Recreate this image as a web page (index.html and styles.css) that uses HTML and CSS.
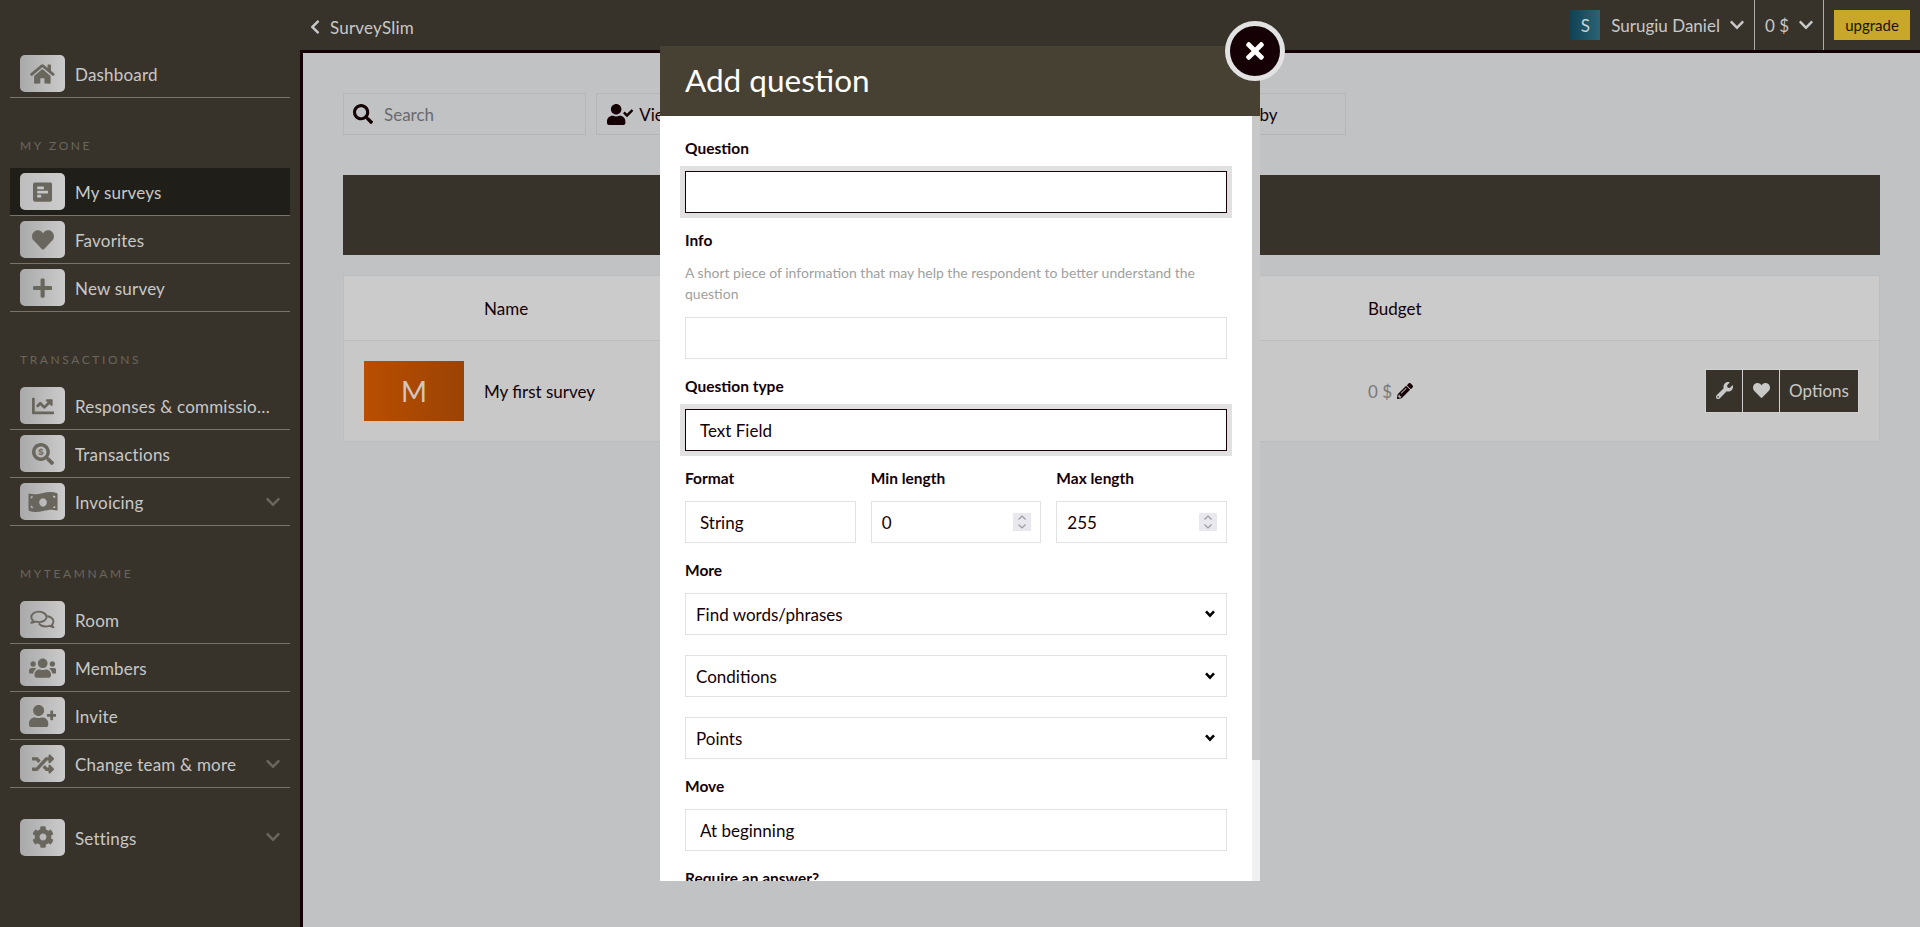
FILE: index.html
```html
<!DOCTYPE html>
<html lang="en">
<head>
    <meta charset="UTF-8">
    <meta name="viewport" content="width=device-width, initial-scale=1.0">
    <title>SurveySlim</title>
    <link rel="stylesheet" href="styles.css">
</head>
<body>
    <div class="app">
        <!-- Sidebar -->
        <nav class="sidebar">
            <a class="nav-item">
                <span class="tile"><svg class="ico" viewBox="0 0 576 512"><path d="M280.37 148.26L96 300.11V464a16 16 0 0 0 16 16l112.06-.29a16 16 0 0 0 15.92-16V368a16 16 0 0 1 16-16h64a16 16 0 0 1 16 16v95.64a16 16 0 0 0 16 16.05L464 480a16 16 0 0 0 16-16V300L295.67 148.26a12.19 12.19 0 0 0-15.3 0zM571.6 251.47L488 182.56V44.05a12 12 0 0 0-12-12h-56a12 12 0 0 0-12 12v72.61L318.47 43a48 48 0 0 0-61 0L4.34 251.47a12 12 0 0 0-1.6 16.9l25.5 31A12 12 0 0 0 45.15 301l235.22-193.74a12.19 12.19 0 0 1 15.3 0L530.9 301a12 12 0 0 0 16.9-1.6l25.5-31a12 12 0 0 0-1.7-16.93z"/></svg></span>
                <span class="nav-label">Dashboard</span>
            </a>

            <div class="nav-title">MY ZONE</div>
            <a class="nav-item active">
                <span class="tile"><svg class="ico" viewBox="0 0 448 512"><path d="M448 432V80c0-26.5-21.5-48-48-48H48C21.5 32 0 53.5 0 80v352c0 26.5 21.5 48 48 48h352c26.5 0 48-21.5 48-48zM112 192c-8.84 0-16-7.16-16-16v-32c0-8.84 7.16-16 16-16h128c8.84 0 16 7.16 16 16v32c0 8.84-7.16 16-16 16H112zm0 96c-8.84 0-16-7.16-16-16v-32c0-8.84 7.16-16 16-16h224c8.84 0 16 7.16 16 16v32c0 8.84-7.16 16-16 16H112zm0 96c-8.84 0-16-7.16-16-16v-32c0-8.84 7.16-16 16-16h64c8.84 0 16 7.16 16 16v32c0 8.84-7.16 16-16 16h-64z"/></svg></span>
                <span class="nav-label">My surveys</span>
            </a>
            <a class="nav-item">
                <span class="tile"><svg class="ico" viewBox="0 0 512 512"><path d="M462.3 62.6C407.5 15.9 326 24.3 275.7 76.2L256 96.5l-19.7-20.3C186.1 24.3 104.5 15.9 49.7 62.6c-62.8 53.6-66.1 149.8-9.9 207.9l193.5 199.8c12.5 12.9 32.8 12.9 45.3 0l193.5-199.8c56.3-58.1 53-154.3-9.8-207.9z"/></svg></span>
                <span class="nav-label">Favorites</span>
            </a>
            <a class="nav-item">
                <span class="tile"><svg class="ico" viewBox="0 0 448 512"><path d="M416 208H272V64c0-17.67-14.33-32-32-32h-32c-17.67 0-32 14.33-32 32v144H32c-17.67 0-32 14.33-32 32v32c0 17.67 14.33 32 32 32h144v144c0 17.67 14.33 32 32 32h32c17.67 0 32-14.33 32-32V304h144c17.67 0 32-14.33 32-32v-32c0-17.67-14.33-32-32-32z"/></svg></span>
                <span class="nav-label">New survey</span>
            </a>

            <div class="nav-title">TRANSACTIONS</div>
            <a class="nav-item">
                <span class="tile"><svg class="ico" viewBox="0 0 512 512"><path d="M496 384H64V80c0-8.84-7.16-16-16-16H16C7.16 64 0 71.16 0 80v336c0 17.67 14.33 32 32 32h464c8.84 0 16-7.16 16-16v-32c0-8.84-7.16-16-16-16zM464 96H345.94c-21.38 0-32.09 25.85-16.97 40.97l32.4 32.4L288 242.75l-73.37-73.37c-12.5-12.5-32.76-12.5-45.25 0l-68.69 68.69c-6.25 6.25-6.25 16.38 0 22.63l22.62 22.62c6.25 6.25 16.38 6.25 22.63 0L192 237.25l73.37 73.37c12.5 12.5 32.76 12.5 45.25 0l96-96 32.4 32.4c15.12 15.12 40.97 4.41 40.97-16.97V112c.01-8.84-7.15-16-15.99-16z"/></svg></span>
                <span class="nav-label">Responses &amp; commissio…</span>
            </a>
            <a class="nav-item">
                <span class="tile"><svg class="ico" viewBox="0 0 512 512"><path d="M505 442.7L405.3 343c-4.5-4.5-10.6-7-17-7H372c27.6-35.3 44-79.7 44-128C416 93.1 322.9 0 208 0S0 93.1 0 208s93.1 208 208 208c48.3 0 92.7-16.4 128-44v16.3c0 6.4 2.5 12.5 7 17l99.7 99.7c9.4 9.4 24.6 9.4 33.9 0l28.3-28.3c9.4-9.4 9.4-24.6.1-34zM208 336c-70.7 0-128-57.2-128-128 0-70.7 57.2-128 128-128 70.7 0 128 57.2 128 128 0 70.7-57.2 128-128 128z"/><text x="208" y="288" text-anchor="middle" font-size="220" font-weight="700">$</text></svg></span>
                <span class="nav-label">Transactions</span>
            </a>
            <a class="nav-item">
                <span class="tile"><svg class="ico ico-money" viewBox="0 0 640 512"><path fill-rule="evenodd" d="M10 90c0-12 10-18 20-14 90 34 190 10 290-12 90-20 190-34 290-2 12 4 20 12 20 26v334c0 12-10 18-20 14-90-34-190-10-290 12-90 20-190 34-290 2-12-4-20-12-20-26zM320 176a80 90 0 1 0 .1 0zM60 130c0 30-4 44 0 52 24 0 40-12 46-44-16 0-32-2-46-8zM580 130c-16-4-34-6-52-6 4 28 24 46 52 50zM60 330v50c18 6 34 8 52 10-4-30-24-54-52-60zM580 340c-24 2-42 20-46 46 16-2 32-2 46 0z"/></svg></span>
                <span class="nav-label">Invoicing</span>
                <svg class="caret" viewBox="0 0 448 512"><path d="M207.029 381.476L12.686 187.132c-9.373-9.373-9.373-24.569 0-33.941l22.667-22.667c9.357-9.357 24.522-9.375 33.901-.04L224 284.505l154.745-154.021c9.379-9.335 24.544-9.317 33.901.04l22.667 22.667c9.373 9.373 9.373 24.569 0 33.941L240.971 381.476c-9.373 9.372-24.569 9.372-33.942 0z"/></svg>
            </a>

            <div class="nav-title">MYTEAMNAME</div>
            <a class="nav-item">
                <span class="tile"><svg class="ico" viewBox="0 0 576 512"><g fill="none" stroke="currentColor" stroke-width="44" stroke-linejoin="round"><path d="M208 62C108 62 30 118 30 188c0 30 14 56 38 78-8 24-22 42-38 58 34-4 66-16 90-34 26 10 56 16 88 16 100 0 178-56 178-118S308 62 208 62z"/><path d="M400 170c82 6 146 58 146 118 0 30-14 56-38 78 8 24 22 42 38 58-34-4-66-16-90-34-26 10-56 16-88 16-70 0-130-28-160-72"/></g></svg></span>
                <span class="nav-label">Room</span>
            </a>
            <a class="nav-item">
                <span class="tile"><svg class="ico" viewBox="0 0 640 512"><path d="M96 224c35.3 0 64-28.7 64-64s-28.7-64-64-64-64 28.7-64 64 28.7 64 64 64zm448 0c35.3 0 64-28.7 64-64s-28.7-64-64-64-64 28.7-64 64 28.7 64 64 64zm32 32h-64c-17.6 0-33.5 7.1-45.1 18.6 40.3 22.1 68.9 62 75.1 109.4h66c17.7 0 32-14.3 32-32v-32c0-35.3-28.7-64-64-64zm-256 0c61.9 0 112-50.1 112-112S381.9 32 320 32 208 82.1 208 144s50.1 112 112 112zm76.8 32h-8.3c-20.8 10-43.9 16-68.5 16s-47.6-6-68.5-16h-8.3C179.6 288 128 339.6 128 403.2V432c0 26.5 21.5 48 48 48h288c26.5 0 48-21.5 48-48v-28.8c0-63.6-51.6-115.2-115.2-115.2zm-223.7-13.4C161.5 263.1 145.6 256 128 256H64c-35.3 0-64 28.7-64 64v32c0 17.7 14.3 32 32 32h65.9c6.3-47.4 34.9-87.3 75.2-109.4z"/></svg></span>
                <span class="nav-label">Members</span>
            </a>
            <a class="nav-item">
                <span class="tile"><svg class="ico" viewBox="0 0 640 512"><path d="M624 208h-64v-64c0-8.8-7.2-16-16-16h-32c-8.8 0-16 7.2-16 16v64h-64c-8.8 0-16 7.2-16 16v32c0 8.8 7.2 16 16 16h64v64c0 8.8 7.2 16 16 16h32c8.8 0 16-7.2 16-16v-64h64c8.8 0 16-7.2 16-16v-32c0-8.8-7.2-16-16-16zm-400 48c70.7 0 128-57.3 128-128S294.7 0 224 0 96 57.3 96 128s57.3 128 128 128zm89.6 32h-16.7c-22.2 10.2-46.9 16-72.9 16s-50.6-5.8-72.9-16h-16.7C60.2 288 0 348.2 0 422.4V464c0 26.5 21.5 48 48 48h352c26.5 0 48-21.5 48-48v-41.6c0-74.2-60.2-134.4-134.4-134.4z"/></svg></span>
                <span class="nav-label">Invite</span>
            </a>
            <a class="nav-item">
                <span class="tile"><svg class="ico" viewBox="0 0 512 512"><path d="M504.971 359.029c9.373 9.373 9.373 24.569 0 33.941l-80 79.984c-15.01 15.01-40.971 4.49-40.971-16.971V416h-58.785a12.004 12.004 0 0 1-8.773-3.812l-70.556-75.596 53.333-57.143L352 336h32v-39.981c0-21.438 25.943-31.998 40.971-16.971l80 79.981zM12 176h84l52.781 56.551 53.333-57.143-70.556-75.596A11.999 11.999 0 0 0 122.785 96H12c-6.627 0-12 5.373-12 12v56c0 6.627 5.373 12 12 12zm372 0v39.984c0 21.46 25.961 31.98 40.971 16.971l80-79.984c9.373-9.373 9.373-24.569 0-33.941l-80-79.981C409.943 24.021 384 34.582 384 56.019V96h-58.785a12.004 12.004 0 0 0-8.773 3.812L96 336H12c-6.627 0-12 5.373-12 12v56c0 6.627 5.373 12 12 12h110.785c3.326 0 6.503-1.381 8.773-3.812L352 176h32z"/></svg></span>
                <span class="nav-label">Change team &amp; more</span>
                <svg class="caret" viewBox="0 0 448 512"><path d="M207.029 381.476L12.686 187.132c-9.373-9.373-9.373-24.569 0-33.941l22.667-22.667c9.357-9.357 24.522-9.375 33.901-.04L224 284.505l154.745-154.021c9.379-9.335 24.544-9.317 33.901.04l22.667 22.667c9.373 9.373 9.373 24.569 0 33.941L240.971 381.476c-9.373 9.372-24.569 9.372-33.942 0z"/></svg>
            </a>

            <a class="nav-item nav-settings">
                <span class="tile"><svg class="ico" viewBox="0 0 512 512"><path d="M487.4 315.7l-42.6-24.6c4.3-23.2 4.3-47 0-70.2l42.6-24.6c4.9-2.8 7.1-8.6 5.5-14-11.1-35.6-30-67.8-54.7-94.6-3.8-4.1-10-5.1-14.8-2.3L380.8 110c-17.9-15.4-38.5-27.3-60.8-35.1V25.8c0-5.6-3.9-10.5-9.4-11.7-36.7-8.2-74.3-7.8-109.2 0-5.5 1.2-9.4 6.1-9.4 11.7V75c-22.2 7.9-42.8 19.8-60.8 35.1L88.7 85.5c-4.9-2.8-11-1.9-14.8 2.3-24.7 26.7-43.6 58.9-54.7 94.6-1.7 5.4.6 11.2 5.5 14L67.3 221c-4.3 23.2-4.3 47 0 70.2l-42.6 24.6c-4.9 2.8-7.1 8.6-5.5 14 11.1 35.6 30 67.8 54.7 94.6 3.8 4.1 10 5.1 14.8 2.3l42.6-24.6c17.9 15.4 38.5 27.3 60.8 35.1v49.2c0 5.6 3.9 10.5 9.4 11.7 36.7 8.2 74.3 7.8 109.2 0 5.5-1.2 9.4-6.1 9.4-11.7v-49.2c22.2-7.9 42.8-19.8 60.8-35.1l42.6 24.6c4.9 2.8 11 1.9 14.8-2.3 24.7-26.7 43.6-58.9 54.7-94.6 1.5-5.5-.7-11.3-5.6-14.1zM256 336c-44.1 0-80-35.9-80-80s35.9-80 80-80 80 35.9 80 80-35.9 80-80 80z"/></svg></span>
                <span class="nav-label">Settings</span>
                <svg class="caret" viewBox="0 0 448 512"><path d="M207.029 381.476L12.686 187.132c-9.373-9.373-9.373-24.569 0-33.941l22.667-22.667c9.357-9.357 24.522-9.375 33.901-.04L224 284.505l154.745-154.021c9.379-9.335 24.544-9.317 33.901.04l22.667 22.667c9.373 9.373 9.373 24.569 0 33.941L240.971 381.476c-9.373 9.372-24.569 9.372-33.942 0z"/></svg>
            </a>
        </nav>

        <div class="content">
            <!-- Top bar -->
            <header class="topbar">
                <a class="back">
                    <svg class="back-ico" viewBox="0 0 320 512"><path d="M34.52 239.03L228.87 44.69c9.37-9.37 24.57-9.37 33.94 0l22.67 22.67c9.36 9.36 9.37 24.52.04 33.9L131.49 256l154.02 154.75c9.34 9.38 9.32 24.54-.04 33.9l-22.67 22.67c-9.37 9.37-24.57 9.37-33.94 0L34.52 272.97c-9.37-9.37-9.37-24.57 0-33.94z"/></svg>
                    SurveySlim
                </a>
                <div class="top-right">
                    <div class="top-user">
                        <span class="avatar">S</span>
                        <span>Surugiu Daniel</span>
                        <svg class="top-caret" viewBox="0 0 448 512"><path d="M207.029 381.476L12.686 187.132c-9.373-9.373-9.373-24.569 0-33.941l22.667-22.667c9.357-9.357 24.522-9.375 33.901-.04L224 284.505l154.745-154.021c9.379-9.335 24.544-9.317 33.901.04l22.667 22.667c9.373 9.373 9.373 24.569 0 33.941L240.971 381.476c-9.373 9.372-24.569 9.372-33.942 0z"/></svg>
                    </div>
                    <div class="top-money">
                        <span>0 $</span>
                        <svg class="top-caret" viewBox="0 0 448 512"><path d="M207.029 381.476L12.686 187.132c-9.373-9.373-9.373-24.569 0-33.941l22.667-22.667c9.357-9.357 24.522-9.375 33.901-.04L224 284.505l154.745-154.021c9.379-9.335 24.544-9.317 33.901.04l22.667 22.667c9.373 9.373 9.373 24.569 0 33.941L240.971 381.476c-9.373 9.372-24.569 9.372-33.942 0z"/></svg>
                    </div>
                    <div class="top-upgrade"><a class="upgrade">upgrade</a></div>
                </div>
            </header>

            <main class="main">
                <div class="filters">
                    <div class="filter filter-search">
                        <svg class="filter-ico" viewBox="0 0 512 512"><path d="M505 442.7L405.3 343c-4.5-4.5-10.6-7-17-7H372c27.6-35.3 44-79.7 44-128C416 93.1 322.9 0 208 0S0 93.1 0 208s93.1 208 208 208c48.3 0 92.7-16.4 128-44v16.3c0 6.4 2.5 12.5 7 17l99.7 99.7c9.4 9.4 24.6 9.4 33.9 0l28.3-28.3c9.4-9.4 9.4-24.6.1-34zM208 336c-70.7 0-128-57.2-128-128 0-70.7 57.2-128 128-128 70.7 0 128 57.2 128 128 0 70.7-57.2 128-128 128z"/></svg>
                        <span class="filter-placeholder">Search</span>
                    </div>
                    <div class="filter filter-view">
                        <svg class="filter-ico" viewBox="0 0 640 512"><path d="M224 256c70.7 0 128-57.3 128-128S294.7 0 224 0 96 57.3 96 128s57.3 128 128 128zm89.6 32h-16.7c-22.2 10.2-46.9 16-72.9 16s-50.6-5.8-72.9-16h-16.7C60.2 288 0 348.2 0 422.4V464c0 26.5 21.5 48 48 48h352c26.5 0 48-21.5 48-48v-41.6c0-74.2-60.2-134.4-134.4-134.4zm323-128.4l-27.8-28.1c-4.6-4.7-12.1-4.7-16.8-.1l-104.8 104-45.5-45.8c-4.6-4.7-12.1-4.7-16.8-.1l-28.1 27.9c-4.7 4.6-4.7 12.1-.1 16.8l81.7 82.3c4.6 4.7 12.1 4.7 16.8.1l141.3-140.2c4.6-4.7 4.7-12.2.1-16.8z"/></svg>
                        <span>View</span>
                    </div>
                    <div class="filter filter-sort"><span>Sort by</span></div>
                </div>

                <div class="banner"></div>

                <div class="table">
                    <div class="table-row table-head">
                        <div></div>
                        <div>Name</div>
                        <div>Budget</div>
                        <div></div>
                    </div>
                    <div class="table-row table-body">
                        <div class="thumb">M</div>
                        <div>My first survey</div>
                        <div class="budget">
                            <span>0 $</span>
                            <svg class="pencil" viewBox="0 0 512 512"><path d="M497.9 142.1l-46.1 46.1c-4.7 4.7-12.3 4.7-17 0l-111-111c-4.7-4.7-4.7-12.3 0-17l46.1-46.1c18.7-18.7 49.1-18.7 67.9 0l60.1 60.1c18.8 18.7 18.8 49.1 0 67.9zM284.2 99.8L21.6 362.4.4 483.9c-2.9 16.4 11.4 30.6 27.8 27.8l121.5-21.3 262.6-262.6c4.7-4.7 4.7-12.3 0-17l-111-111c-4.8-4.7-12.4-4.7-17.1 0zM124.1 339.9c-5.5-5.5-5.5-14.3 0-19.8l154-154c5.5-5.5 14.3-5.5 19.8 0s5.5 14.3 0 19.8l-154 154c-5.5 5.5-14.3 5.5-19.8 0zM88 424h48v36.3l-64.5 11.3-31.1-31.1L51.7 376H88v48z"/></svg>
                        </div>
                        <div class="actions">
                            <a class="action action-ico"><svg viewBox="0 0 512 512"><path d="M507.73 109.1c-2.24-9.03-13.54-12.09-20.12-5.51l-74.36 74.36-67.88-11.31-11.31-67.88 74.36-74.36c6.62-6.62 3.43-17.9-5.66-20.16-47.38-11.74-99.55.91-136.58 37.93-39.64 39.64-50.55 97.1-34.05 147.2L18.74 402.76c-24.99 24.99-24.99 65.51 0 90.5 24.99 24.99 65.51 24.99 90.5 0l213.21-213.21c50.12 16.71 107.47 5.68 147.37-34.22 37.07-37.07 49.7-89.32 37.91-136.73zM64 472c-13.25 0-24-10.75-24-24 0-13.26 10.75-24 24-24s24 10.74 24 24c0 13.25-10.75 24-24 24z"/></svg></a>
                            <a class="action action-ico"><svg viewBox="0 0 512 512"><path d="M462.3 62.6C407.5 15.9 326 24.3 275.7 76.2L256 96.5l-19.7-20.3C186.1 24.3 104.5 15.9 49.7 62.6c-62.8 53.6-66.1 149.8-9.9 207.9l193.5 199.8c12.5 12.9 32.8 12.9 45.3 0l193.5-199.8c56.3-58.1 53-154.3-9.8-207.9z"/></svg></a>
                            <a class="action action-text">Options</a>
                        </div>
                    </div>
                </div>
            </main>
        </div>
    </div>

    <!-- Add question modal -->
    <div class="modal">
        <div class="modal-head">
            <h2>Add question</h2>
        </div>
        <button class="modal-close" type="button" aria-label="Close">
            <svg viewBox="0 0 352 512"><path d="M242.72 256l100.07-100.07c12.28-12.28 12.28-32.19 0-44.48l-22.24-22.24c-12.28-12.28-32.19-12.28-44.48 0L176 189.28 75.93 89.21c-12.28-12.28-32.19-12.28-44.48 0L9.21 111.45c-12.28 12.28-12.28 32.19 0 44.48L109.28 256 9.21 356.07c-12.28 12.28-12.28 32.19 0 44.48l22.24 22.24c12.28 12.28 32.2 12.28 44.48 0L176 322.72l100.07 100.07c12.28 12.28 32.2 12.28 44.48 0l22.24-22.24c12.28-12.28 12.28-32.19 0-44.48L242.72 256z"/></svg>
        </button>
        <div class="modal-main">
            <form class="modal-body">
                <div class="field">
                    <label for="question">Question</label>
                    <input id="question" class="input focus" type="text">
                </div>
                <div class="field">
                    <label for="info">Info</label>
                    <p class="help">A short piece of information that may help the respondent to better understand the question</p>
                    <input id="info" class="input" type="text">
                </div>
                <div class="field">
                    <label for="qtype">Question type</label>
                    <input id="qtype" class="input focus" type="text" value="Text Field">
                </div>
                <div class="field-row">
                    <div class="field">
                        <label for="format">Format</label>
                        <input id="format" class="input" type="text" value="String">
                    </div>
                    <div class="field">
                        <label for="minlen">Min length</label>
                        <div class="number-wrap">
                            <input id="minlen" class="input number" type="number" value="0">
                            <span class="spin"><svg viewBox="0 0 14 18"><path d="M3.5 6.5L7 3l3.5 3.5M3.5 11.5L7 15l3.5-3.5"/></svg></span>
                        </div>
                    </div>
                    <div class="field">
                        <label for="maxlen">Max length</label>
                        <div class="number-wrap">
                            <input id="maxlen" class="input number" type="number" value="255">
                            <span class="spin"><svg viewBox="0 0 14 18"><path d="M3.5 6.5L7 3l3.5 3.5M3.5 11.5L7 15l3.5-3.5"/></svg></span>
                        </div>
                    </div>
                </div>
                <div class="field">
                    <label for="words">More</label>
                    <select id="words" class="select"><option>Find words/phrases</option></select>
                    <select class="select" aria-label="Conditions"><option>Conditions</option></select>
                    <select class="select" aria-label="Points"><option>Points</option></select>
                </div>
                <div class="field">
                    <label for="move">Move</label>
                    <input id="move" class="input" type="text" value="At beginning">
                </div>
                <div class="field">
                    <label>Require an answer?</label>
                </div>
            </form>
            <div class="scrollbar"><div class="scrollbar-thumb"></div></div>
        </div>
    </div>
</body>
</html>
```

FILE: styles.css
```css
* {
    box-sizing: border-box;
}
html, body {
    height: 100%;
}
body {
    margin: 0;
    overflow: hidden;
    font-family: "Lato", "Noto Sans", sans-serif;
    font-size: 17px;
    color: #140005;
    background: #c1c2c4;
}
.app {
    display: flex;
    height: 927px;
}

/* Sidebar */
.sidebar {
    width: 300px;
    flex: none;
    padding: 50px 10px 0;
    background: #38332a;
    color: #c8c8c8;
}
.nav-item {
    display: flex;
    align-items: center;
    height: 48px;
    padding: 5px 10px 5px 10px;
    border-bottom: 1px solid #78746a;
}
.nav-item.active {
    background: #1f1e19;
}
.nav-settings {
    margin-top: 25px;
    border-bottom: 0;
}
.tile {
    display: flex;
    align-items: center;
    justify-content: center;
    flex: none;
    width: 45px;
    height: 37px;
    margin-right: 10px;
    border-radius: 5px;
    background: linear-gradient(90deg, #a9a9a9, #cbcbcb);
    color: #69665e;
}
.nav-item.active .tile {
    background: linear-gradient(90deg, #bdbdbd, #cdcdcd);
}
.ico {
    height: 22px;
    fill: currentColor;
}
.ico-money {
    height: 24px;
}
.ico text {
    font-family: "Liberation Sans", sans-serif;
}
.nav-label {
    flex: 1;
    min-width: 0;
    padding-top: 2px;
    letter-spacing: .2px;
    white-space: nowrap;
}
.caret {
    flex: none;
    width: 14px;
    height: 16px;
    margin-left: 26px;
    fill: #69665e;
}
.nav-title {
    height: 20px;
    margin: 38px 0 12px 10px;
    font-size: 12px;
    line-height: 20px;
    letter-spacing: 2.6px;
    color: #69665e;
}

/* Top bar */
.content {
    flex: 1;
    min-width: 0;
    display: flex;
    flex-direction: column;
}
.topbar {
    display: flex;
    align-items: center;
    justify-content: space-between;
    flex: none;
    height: 50px;
    background: #38332a;
    color: #c8c8c8;
}
.back {
    display: flex;
    align-items: center;
    gap: 10px;
    padding: 4px 0 0 10px;
    letter-spacing: .2px;
}
.back-ico {
    width: 10px;
    height: 16px;
    fill: #c8c8c8;
}
.top-right {
    display: flex;
    align-items: stretch;
    height: 50px;
}
.top-user, .top-money {
    display: flex;
    align-items: center;
}
.top-user {
    padding-right: 10px;
}
.avatar {
    display: flex;
    align-items: center;
    justify-content: center;
    width: 30px;
    height: 30px;
    margin-right: 11px;
    background: linear-gradient(90deg, #0f4254, #2b6475);
    color: #c8d4d8;
    font-size: 17px;
}
.top-caret {
    width: 14px;
    height: 16px;
    margin-left: 10px;
    fill: #c8c8c8;
}
.top-money {
    padding: 0 10px;
    border-left: 1px solid #b0aea8;
}
.top-upgrade {
    display: flex;
    align-items: center;
    padding: 0 10px;
    border-left: 1px solid #b0aea8;
}
.upgrade {
    display: flex;
    align-items: center;
    justify-content: center;
    width: 76px;
    height: 30px;
    background: #c9a72a;
    color: #1a1400;
    font-size: 15px;
}

/* Page */
.main {
    flex: 1;
    padding: 40px 40px 0;
    border-top: 3px solid #140005;
    border-left: 3px solid #140005;
    background: #c1c2c4;
}
.filters {
    display: flex;
    gap: 10px;
    height: 42px;
    width: 1003px;
    margin-bottom: 40px;
}
.filter {
    display: flex;
    align-items: center;
    border: 1px solid #b5b6b8;
}
.filter-search {
    width: 243px;
    padding-left: 9px;
}
.filter-view {
    width: 520px;
    padding-left: 10px;
}
.filter-sort {
    flex: 1;
    padding-left: 97px;
}
.filter-ico {
    height: 20px;
    margin-right: 11px;
    fill: #140005;
}
.filter-view .filter-ico {
    height: 21px;
    margin-right: 6px;
}
.filter-placeholder {
    color: #6a6a6c;
}
.banner {
    height: 80px;
    margin-bottom: 20px;
    background: #38332a;
}
.table {
    border: 1px solid #bcbdbf;
}
.table-row {
    display: grid;
    grid-template-columns: 140px 884px 1fr auto;
    align-items: center;
}
.table-head {
    height: 65px;
    border-bottom: 1px solid #bcbdbf;
    background: #cbcbcb;
}
.table-body {
    height: 100px;
    padding-right: 20px;
    background: #c8c8c8;
}
.thumb {
    display: flex;
    align-items: center;
    justify-content: center;
    width: 100px;
    height: 60px;
    margin-left: 20px;
    background: linear-gradient(90deg, #b94e00, #9b4305);
    color: #d0c8c0;
    font-size: 28px;
}
.budget {
    display: flex;
    align-items: center;
    gap: 5px;
    color: #787878;
}
.pencil {
    width: 16px;
    height: 16px;
    fill: #140005;
}
.actions {
    display: flex;
    height: 44px;
    margin-bottom: 1px;
    border: 1px solid #d0d0d0;
    background: #38332a;
    color: #c8c8c8;
}
.action {
    display: flex;
    align-items: center;
    justify-content: center;
}
.action + .action {
    border-left: 1px solid #d0d0d0;
}
.action-ico {
    width: 37px;
}
.action-ico:first-child {
    width: 36px;
}
.action-ico svg {
    width: 17px;
    height: 17px;
    fill: #c8c8c8;
}
.action-text {
    width: 79px;
}

/* Modal */
.modal {
    position: fixed;
    top: 46px;
    left: 660px;
    display: flex;
    flex-direction: column;
    width: 600px;
    height: 835px;
    background: #fff;
}
.modal-head {
    flex: none;
    display: flex;
    align-items: center;
    height: 70px;
    padding: 0 0 2px 25px;
    background: #474133;
}
.modal-head h2 {
    margin: 0;
    font-size: 31.5px;
    font-weight: 400;
    color: #fff;
}
.modal-close {
    position: absolute;
    top: -25px;
    left: 565px;
    display: flex;
    align-items: center;
    justify-content: center;
    width: 60px;
    height: 60px;
    padding: 0;
    border: 5px solid #e2e2e2;
    border-radius: 50%;
    background: #140005;
}
.modal-close svg {
    width: 18px;
    height: 26px;
    fill: #fff;
}
.modal-main {
    flex: 1;
    min-height: 0;
    display: flex;
}
.modal-body {
    flex: 1;
    min-width: 0;
    overflow: hidden;
    padding: 23px 25px 0;
}
.scrollbar {
    flex: none;
    width: 8px;
    background: #f0f0f0;
}
.scrollbar-thumb {
    height: 644px;
    background: #c8c8c8;
}
.field {
    margin-bottom: 18px;
}
.field label {
    display: block;
    height: 20px;
    margin-bottom: 12px;
    font-size: 15.5px;
    line-height: 18px;
    font-weight: 700;
}
.help {
    margin: -1px 0 13px;
    font-size: 14px;
    line-height: 21px;
    color: #a0a0a0;
}
.input, .select {
    display: block;
    width: 100%;
    height: 42px;
    font: inherit;
    color: #140005;
    background: #fff;
    border: 1px solid #e2e2e2;
    border-radius: 0;
    outline: 0;
}
.input {
    padding: 0 14px;
}
.input.focus {
    border-color: #140005;
    box-shadow: 0 0 0 5px #e1e1e1;
}
.number-wrap {
    position: relative;
}
.number {
    padding: 0 10px;
    appearance: textfield;
}
.number::-webkit-inner-spin-button {
    display: none;
}
.spin {
    position: absolute;
    top: 12px;
    right: 10px;
    display: block;
    width: 18px;
    height: 18px;
    background: #e8e8ee;
}
.spin svg {
    display: block;
    width: 18px;
    height: 18px;
    fill: none;
    stroke: #9a9aa0;
    stroke-width: 1.2;
}
.select {
    padding: 0 10px;
    margin-bottom: 20px;
    appearance: none;
    background: #fff url("data:image/svg+xml,%3Csvg xmlns='http://www.w3.org/2000/svg' viewBox='0 0 10 8'%3E%3Cpath d='M1 1.4L5 5.6l4-4.2' fill='none' stroke='%23000' stroke-width='2.6'/%3E%3C/svg%3E") no-repeat right 11px center / 10px 8px;
}
.select:last-child {
    margin-bottom: 0;
}
.field-row {
    display: grid;
    grid-template-columns: repeat(3, 1fr);
    gap: 15px;
}
```
